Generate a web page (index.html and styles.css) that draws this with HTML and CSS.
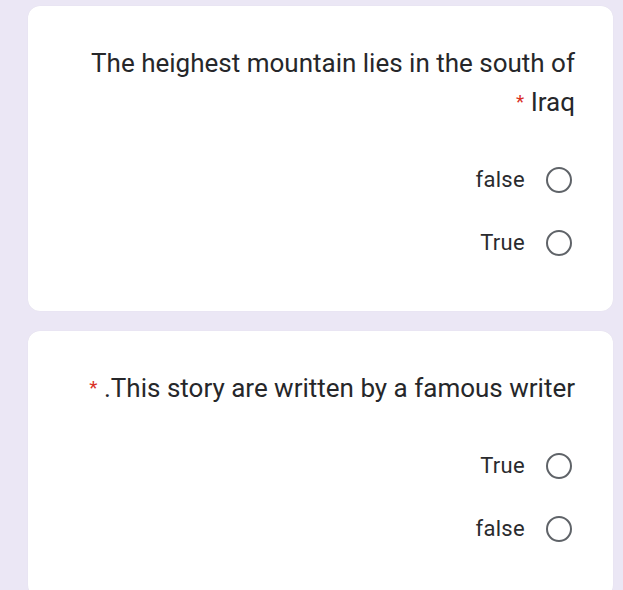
FILE: index.html
```html
<!DOCTYPE html>
<html lang="en">
<head>
<meta charset="utf-8">
<link rel="stylesheet" href="styles.css">
</head>
<body>
<main class="page" dir="rtl">
  <section class="card">
    <div class="question"><span>The heighest mountain lies in the south of Iraq</span> <span class="req">*</span></div>
    <div class="options">
      <label class="option"><span class="radio"></span><span class="label">false</span></label>
      <label class="option"><span class="radio"></span><span class="label">True</span></label>
    </div>
  </section>
  <section class="card">
    <div class="question"><span>This story are written by a famous writer.</span> <span class="req">*</span></div>
    <div class="options">
      <label class="option"><span class="radio"></span><span class="label">True</span></label>
      <label class="option"><span class="radio"></span><span class="label">false</span></label>
    </div>
  </section>
</main>
</body>
</html>
```

FILE: styles.css
```css
html, body {
  margin: 0;
  padding: 0;
  background: #ebe7f5;
  height: 100%;
  overflow: hidden;
}
body {
  font-family: Roboto, "Liberation Sans", Arial, sans-serif;
  color: #202124;
}
.page {
  display: flex;
  flex-direction: column;
  gap: 20px;
  padding: 6px 10px 0 28px;
}
.card {
  background: #ffffff;
  border-radius: 12px;
  padding: 38px 38px 37px 40px;
  box-shadow: 0 0 1px rgba(0,0,0,0.08);
}
.question {
  font-size: 26px;
  line-height: 39px;
  text-align: right;
  color: #26272a;
}
.req {
  color: #d93025;
  font-size: 19px;
  line-height: 1;
  vertical-align: 3px;
}
.options {
  margin-top: 26px;
  display: flex;
  flex-direction: column;
  padding-right: 3px;
}
.option {
  height: 63px;
  display: flex;
  align-items: center;
  gap: 21px;
}
.radio {
  width: 22px;
  height: 22px;
  border: 2.5px solid #5f6368;
  border-radius: 50%;
  flex: none;
}
.label {
  font-size: 22px;
  letter-spacing: 0.3px;
  color: #2a2b2e;
}
```
